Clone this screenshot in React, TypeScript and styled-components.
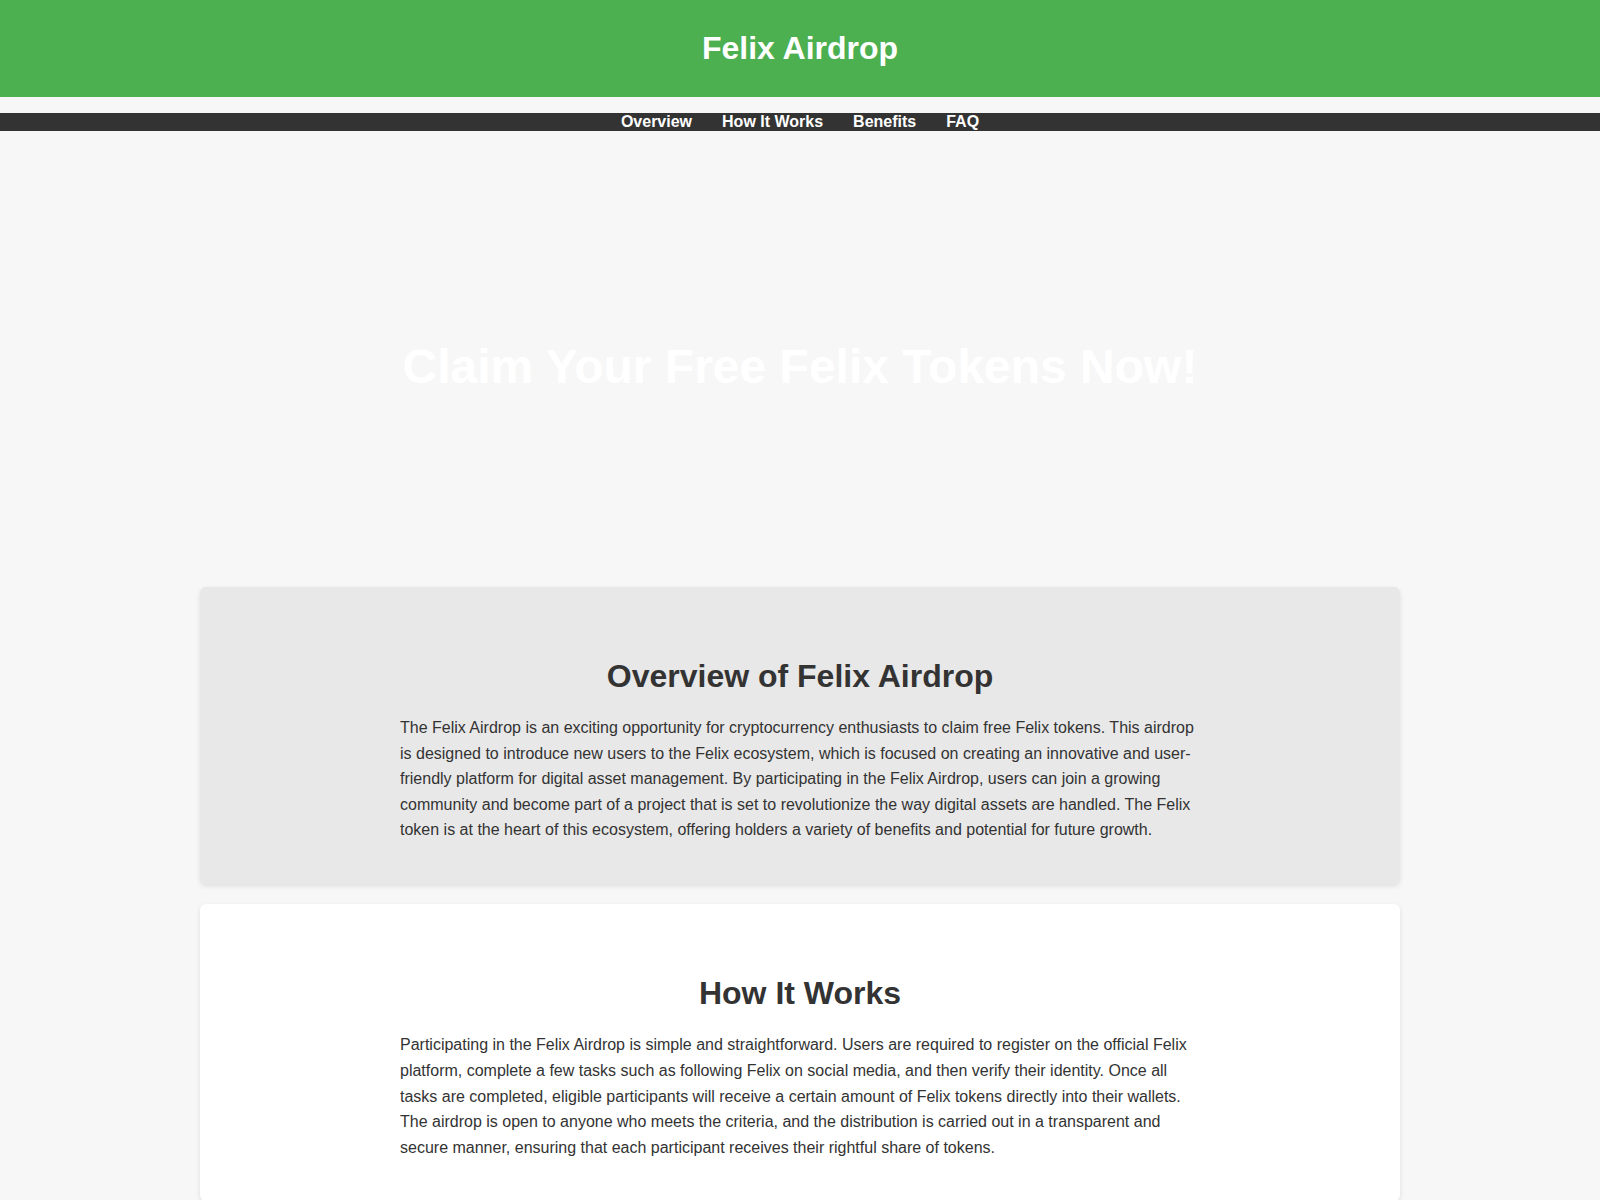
import React from 'react';
import styled, { createGlobalStyle } from 'styled-components';

const GlobalStyle = createGlobalStyle`
  body {
    margin: 0;
    font-family: 'Liberation Sans', Arial, sans-serif;
    background-color: #f7f7f7;
    color: #333;
    line-height: 1.6;
  }
`;

const Header = styled.header`
  background-color: #4caf50;
  color: #fff;
  padding: 30px 0;
  text-align: center;

  h1 {
    margin: 0;
    font-size: 32px;
    line-height: 37px;
  }
`;

const Nav = styled.nav`
  margin-top: 16px;
  background-color: #333;
  display: flex;
  justify-content: center;
`;

const NavLink = styled.a`
  color: #fff;
  font-weight: 700;
  font-size: 16px;
  line-height: 18px;
  margin: 0 15px;
  text-decoration: none;
`;

const Hero = styled.section`
  padding: 207px 20px 191px;
  text-align: center;

  h2 {
    margin: 0;
    color: #fff;
    font-size: 48px;
    line-height: 1.2;
  }
`;

const Main = styled.main`
  max-width: 1200px;
  margin: 0 auto;
  display: flex;
  flex-direction: column;
  gap: 20px;
`;

const Card = styled.section<{ $shade?: boolean }>`
  background-color: ${p => (p.$shade ? '#e8e8e8' : '#fff')};
  border-radius: 6px;
  box-shadow: 0 2px 5px rgba(0, 0, 0, 0.1);
  padding: 50px 40px 41px;
  text-align: center;

  h2 {
    margin: 20px 0;
    font-size: 32px;
    line-height: 1.2;
  }

  p {
    max-width: 800px;
    margin: 0 auto;
    text-align: left;
    font-size: 16px;
    line-height: 1.6;
  }
`;

const sections = [
  {
    id: 'overview',
    title: 'Overview of Felix Airdrop',
    text:
      'The Felix Airdrop is an exciting opportunity for cryptocurrency enthusiasts to claim free Felix tokens. This airdrop is designed to introduce new users to the Felix ecosystem, which is focused on creating an innovative and user-friendly platform for digital asset management. By participating in the Felix Airdrop, users can join a growing community and become part of a project that is set to revolutionize the way digital assets are handled. The Felix token is at the heart of this ecosystem, offering holders a variety of benefits and potential for future growth.',
  },
  {
    id: 'how-it-works',
    title: 'How It Works',
    text:
      'Participating in the Felix Airdrop is simple and straightforward. Users are required to register on the official Felix platform, complete a few tasks such as following Felix on social media, and then verify their identity. Once all tasks are completed, eligible participants will receive a certain amount of Felix tokens directly into their wallets. The airdrop is open to anyone who meets the criteria, and the distribution is carried out in a transparent and secure manner, ensuring that each participant receives their rightful share of tokens.',
  },
];

const App = () => {
  return (
    <>
      <GlobalStyle />
      <Header>
        <h1>Felix Airdrop</h1>
      </Header>
      <Nav>
        <NavLink href="#overview">Overview</NavLink>
        <NavLink href="#how-it-works">How It Works</NavLink>
        <NavLink href="#benefits">Benefits</NavLink>
        <NavLink href="#faq">FAQ</NavLink>
      </Nav>
      <Hero>
        <h2>Claim Your Free Felix Tokens Now!</h2>
      </Hero>
      <Main>
        {sections.map((s, i) => (
          <Card key={s.id} id={s.id} $shade={i === 0}>
            <h2>{s.title}</h2>
            <p>{s.text}</p>
          </Card>
        ))}
      </Main>
    </>
  );
};

export default App;
